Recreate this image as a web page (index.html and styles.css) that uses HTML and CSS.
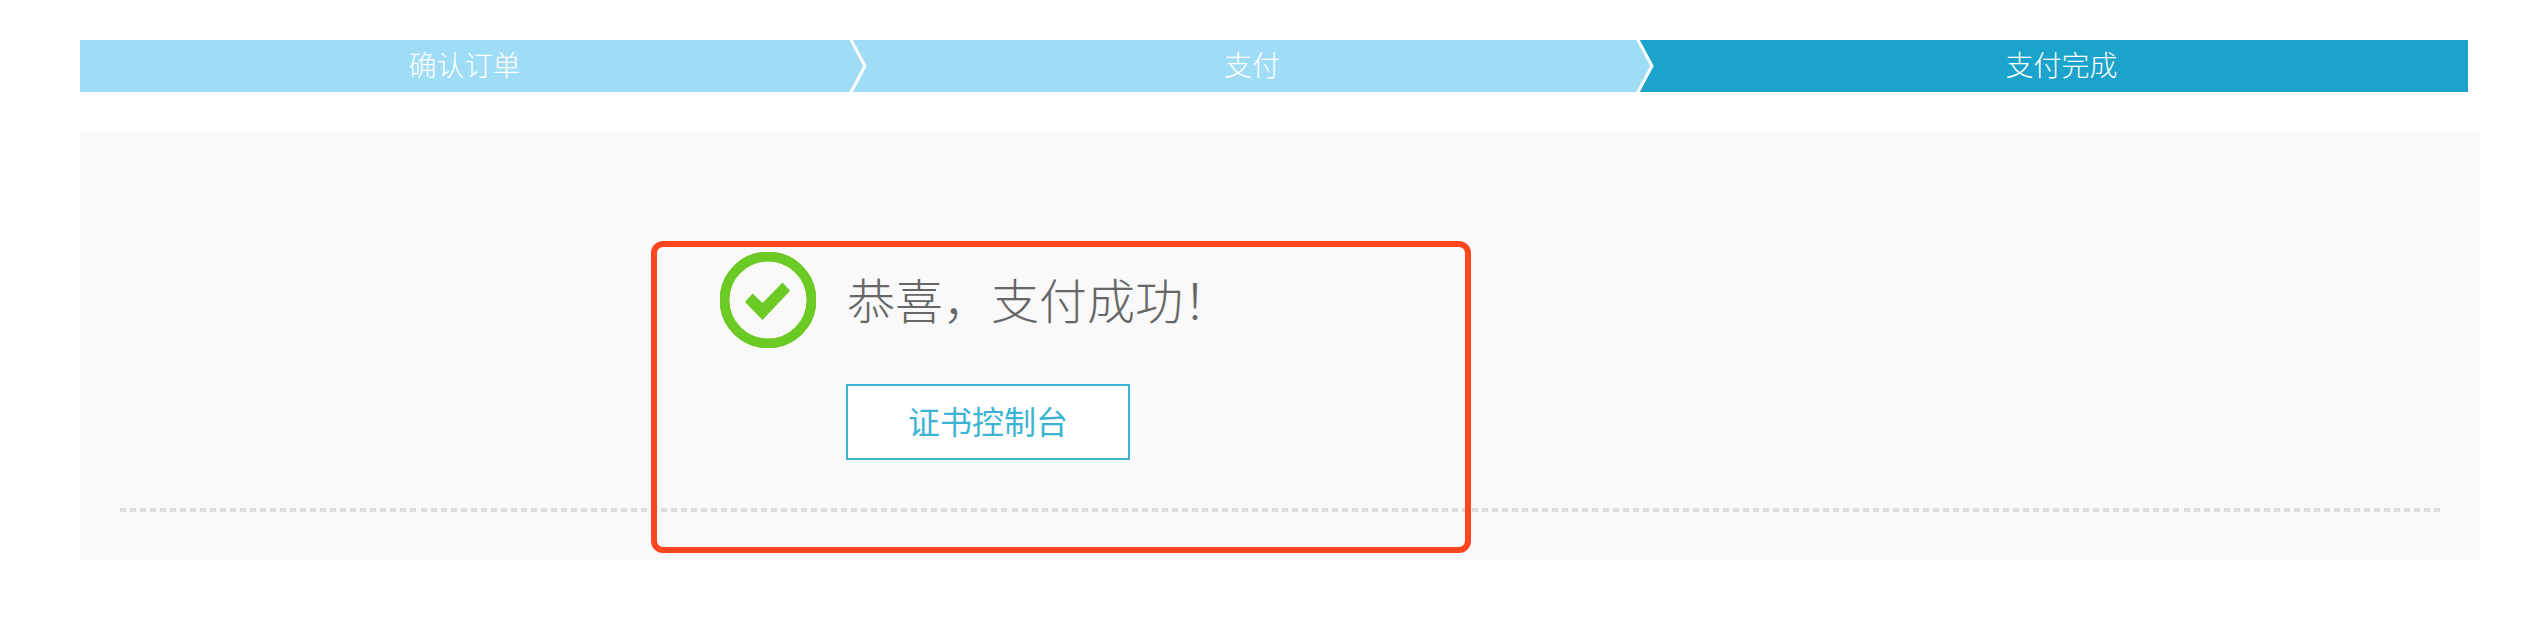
FILE: index.html
```html
<!DOCTYPE html>
<html lang="zh-CN">
<head>
  <meta charset="UTF-8">
  <title>支付完成</title>
  <link rel="stylesheet" href="styles.css">
</head>
<body>
  <div class="container">
    <!-- Steps -->
    <div class="steps">
      <div class="step step-first">确认订单</div>
      <div class="step step-second">
        <svg class="chevron" width="22" height="52" viewBox="0 0 22 52"><path class="chevron-line" d="M1 -2L16 26L1 54"/></svg>
        支付
      </div>
      <div class="step step-active">
        <svg class="chevron" width="22" height="52" viewBox="0 0 22 52"><path class="chevron-fill" d="M0 0H2L16 26L2 52H0Z"/><path class="chevron-line" d="M1 -2L16 26L1 54"/></svg>
        支付完成
      </div>
    </div>

    <!-- Result panel -->
    <div class="panel">
      <div class="result">
        <div class="result-head">
          <svg class="result-icon" width="96" height="96" viewBox="0 0 96 96">
            <circle cx="48" cy="48" r="43.5" fill="none" stroke="#6bcb24" stroke-width="10"/>
            <path d="M25 50L32.5 41.5L42.5 51L62.5 30.5L70 38.7L42.5 68Z" fill="#6bcb24"/>
          </svg>
          <h2>恭喜&#xFF0C;支付成功&#xFF01;</h2>
        </div>
        <a class="btn" href="#">证书控制台</a>
      </div>
      <div class="divider"></div>
      <div class="highlight"></div>
    </div>
  </div>
</body>
</html>
```

FILE: styles.css
```css
body {
  margin: 0;
  background: #fff;
  font-family: "Noto Sans CJK SC", "Noto Sans", sans-serif;
}
.container {
  width: 2400px;
  padding: 40px 0 0 80px;
}
.steps {
  display: flex;
  width: 2388px;
  height: 52px;
  color: #fff;
  font-size: 28px;
  font-weight: 300;
  line-height: 48px;
  text-align: center;
}
.step {
  position: relative;
  box-sizing: border-box;
  background: #9fddf6;
}
.step-first {
  width: 769px;
}
.step-second {
  width: 787px;
  padding-left: 19px;
}
.step-active {
  width: 832px;
  padding-left: 19px;
  background: #1ba3cb;
}
.chevron {
  position: absolute;
  left: 0;
  top: 0;
}
.chevron-line {
  fill: none;
  stroke: #fff;
  stroke-width: 3;
}
.chevron-fill {
  fill: #9fddf6;
}
.panel {
  position: relative;
  box-sizing: border-box;
  height: 428px;
  margin-top: 40px;
  padding-top: 120px;
  background: #f9f9f9;
}
.result {
  margin-left: 640px;
}
.result-head {
  display: flex;
  align-items: center;
  gap: 31px;
  height: 96px;
}
.result-icon {
  display: block;
}
h2 {
  margin: 0;
  color: #666;
  font-size: 48px;
  font-weight: 300;
  line-height: 92px;
  padding-bottom: 4px;
}
.btn {
  display: block;
  box-sizing: border-box;
  width: 284px;
  height: 76px;
  margin: 36px 0 0 126px;
  border: 2px solid #3bb4d4;
  background: #fff;
  color: #3bb4d4;
  font-size: 32px;
  line-height: 68px;
  text-align: center;
  text-decoration: none;
}
.divider {
  height: 4px;
  margin: 48px 40px 0;
  background: repeating-linear-gradient(to right, #ddd 0, #ddd 6px, transparent 6px, transparent 10.017px);
}
.highlight {
  position: absolute;
  left: 571px;
  top: 109px;
  box-sizing: border-box;
  width: 820px;
  height: 312px;
  border: 6px solid #ff461f;
  border-radius: 12px;
}
```
